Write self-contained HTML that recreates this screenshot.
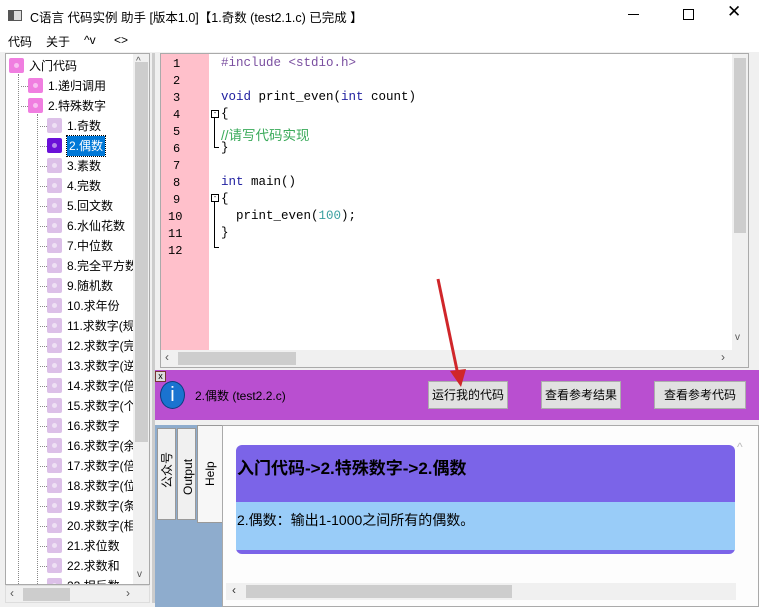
<!DOCTYPE html>
<html><head><meta charset="utf-8"><style>
*{margin:0;padding:0;box-sizing:border-box}
body{width:759px;height:607px;position:relative;overflow:hidden;background:#f0f0f0;font-family:"Liberation Sans","Microsoft YaHei","Noto Sans CJK SC",sans-serif;font-size:12px;color:#000}
.abs{position:absolute}
.title{left:0;top:0;width:759px;height:30px;background:#fff}
.menu{left:0;top:30px;width:759px;height:22px;background:#fff;font-size:12px}
.tree{left:5px;top:53px;width:145px;height:532px;background:#fff;border:1px solid #aaa;overflow:hidden}
.ti{position:absolute;height:20px;line-height:20px;font-size:12px;white-space:nowrap}
.ico{position:absolute;width:15px;height:15px;border-radius:2px}
.ico:after{content:"";position:absolute;left:5px;top:5px;width:5px;height:5px;border-radius:50%;background:rgba(255,255,255,.5)}
.code{font-family:"Liberation Mono",monospace;font-size:12.5px}
.btn{position:absolute;top:381px;height:28px;background:#e1e1e1;border:1px solid #adadad;text-align:center;line-height:26px;font-size:12px}
</style></head><body>
<div class="abs title">
 <div class="abs" style="left:8px;top:10px;width:14px;height:11px;border:1px solid #555;background:#ddd"><div style="width:5px;height:9px;background:#555"></div></div>
 <div class="abs" style="left:30px;top:7px;font-size:12.5px">C语言 代码实例 助手 [版本1.0]【1.奇数 (test2.1.c) 已完成 】</div>
 <div class="abs" style="left:628px;top:14px;width:11px;height:1px;background:#000"></div>
 <div class="abs" style="left:683px;top:9px;width:11px;height:11px;border:1px solid #000"></div>
 <div class="abs" style="left:727px;top:2px;font-size:17px">✕</div>
</div>
<div class="abs menu"><span class="abs" style="left:8px;top:3px">代码</span><span class="abs" style="left:46px;top:3px">关于</span><span class="abs" style="left:84px;top:3px">^v</span><span class="abs" style="left:114px;top:3px">&lt;&gt;</span></div>
<div class="abs tree">
<div class="abs" style="left:12px;top:20px;width:0;height:520px;border-left:1px dotted #888"></div>
<div class="abs" style="left:31px;top:60px;width:0;height:480px;border-left:1px dotted #888"></div>
<div id="t"></div>
<div class="abs" style="left:127px;top:0;width:17px;height:532px;background:#f0f0f0"></div>
<div class="abs" style="left:129px;top:8px;width:13px;height:380px;background:#cdcdcd"></div>
<div class="abs" style="left:130px;top:2px;font-size:10px;color:#555">^</div>
<div class="abs" style="left:131px;top:515px;font-size:10px;color:#555">v</div>
</div>
<div class="abs" style="left:5px;top:585px;width:145px;height:18px;background:#f0f0f0;border:1px solid #ddd"><div class="abs" style="left:17px;top:2px;width:47px;height:13px;background:#cdcdcd"></div><span class="abs" style="left:4px;top:0;color:#555">‹</span><span class="abs" style="left:120px;top:0;color:#555">›</span></div>
<div class="abs" style="left:152px;top:53px;width:3px;height:550px;background:#ccc"></div>
<!-- editor -->
<div class="abs" style="left:160px;top:53px;width:589px;height:315px;background:#fff;border:1px solid #aaa"></div>
<div class="abs" style="left:161px;top:54px;width:48px;height:296px;background:#ffc0cb"></div>
<div class="abs" style="left:209px;top:54px;width:523px;height:296px;background:#fff"></div>
<div class="abs" style="left:732px;top:54px;width:16px;height:296px;background:#f0f0f0"><div class="abs" style="left:2px;top:4px;width:12px;height:175px;background:#cdcdcd"></div><span class="abs" style="left:3px;top:278px;font-size:10px;color:#555">v</span></div>
<div class="abs" style="left:161px;top:350px;width:587px;height:17px;background:#f0f0f0"><div class="abs" style="left:17px;top:2px;width:118px;height:13px;background:#cdcdcd"></div><span class="abs" style="left:4px;top:0;color:#555">‹</span><span class="abs" style="left:560px;top:0;color:#555">›</span></div>
<div id="code"></div>
<div class="abs" style="left:211px;top:110px;width:8px;height:8px;border:1px solid #000;font-size:7px;line-height:5px;text-align:center">-</div>
<div class="abs" style="left:214px;top:118px;width:5px;height:30px;border-left:1px solid #000;border-bottom:1px solid #000"></div>
<div class="abs" style="left:211px;top:194px;width:8px;height:8px;border:1px solid #000;font-size:7px;line-height:5px;text-align:center">-</div>
<div class="abs" style="left:214px;top:202px;width:5px;height:46px;border-left:1px solid #000;border-bottom:1px solid #000"></div>
<!-- purple bar -->
<div class="abs" style="left:155px;top:370px;width:604px;height:50px;background:#b94fd0"></div>
<div class="abs" style="left:155px;top:371px;width:11px;height:11px;background:#ddd;border:1px solid #733;font-size:9px;line-height:8px;text-align:center">x</div>
<div class="abs" style="left:160px;top:381px;width:25px;height:28px;border-radius:50%;background:#1a73d0;border:1px solid #0b3d80;color:#fff;text-align:center;font-size:20px;line-height:26px">i</div>
<div class="abs" style="left:195px;top:387px;font-size:12px">2.偶数 (test2.2.c)</div>
<div class="btn" style="left:428px;width:80px">运行我的代码</div>
<div class="btn" style="left:541px;width:80px">查看参考结果</div>
<div class="btn" style="left:654px;width:92px">查看参考代码</div>
<svg class="abs" style="left:430px;top:275px" width="40" height="120"><line x1="8" y1="4" x2="28" y2="100" stroke="#d0262a" stroke-width="3"/><polygon points="20,96 36,94 31,112" fill="#d0262a"/></svg>
<!-- bottom -->
<div class="abs" style="left:155px;top:425px;width:604px;height:182px;background:#8eaccd"></div>
<div class="abs" style="left:222px;top:425px;width:537px;height:182px;background:#fdfdfd;border:1px solid #aaa"></div>
<div class="abs" style="left:157px;top:428px;width:19px;height:92px;background:#f0f0f0;border:1px solid #999"></div>
<div class="abs" style="left:177px;top:428px;width:19px;height:92px;background:#f0f0f0;border:1px solid #999"></div>
<div class="abs" style="left:197px;top:425px;width:25px;height:98px;background:#f7f7f7;border:1px solid #999;border-right:none"></div>
<div class="abs" style="left:158px;top:488px;transform:rotate(-90deg);transform-origin:0 0;font-size:12px;width:60px">公众号</div>
<div class="abs" style="left:181px;top:495px;transform:rotate(-90deg);transform-origin:0 0;font-size:12px">Output</div>
<div class="abs" style="left:203px;top:486px;transform:rotate(-90deg);transform-origin:0 0;font-size:12px">Help</div>
<div class="abs" style="left:236px;top:445px;width:499px;height:109px;background:#7b64e8;border-radius:6px"></div>
<div class="abs" style="left:236px;top:502px;width:499px;height:48px;background:#99ccf8"></div>
<div class="abs" style="left:237px;top:454px;font-size:17px;font-weight:bold">入门代码-&gt;2.特殊数字-&gt;2.偶数</div>
<div class="abs" style="left:237px;top:510px;font-size:14px">2.偶数：输出1-1000之间所有的偶数。</div>
<div class="abs" style="left:226px;top:583px;width:510px;height:17px;background:#f0f0f0"><div class="abs" style="left:20px;top:2px;width:266px;height:13px;background:#cdcdcd"></div><span class="abs" style="left:6px;top:0;color:#333">‹</span></div>
<div class="abs" style="left:737px;top:440px;font-size:12px;color:#bbb">^</div>
<script>
var items=[["入门代码",0,"#f07ee0"],["1.递归调用",1,"#f07ee0"],["2.特殊数字",1,"#f07ee0"],["1.奇数",2],["2.偶数",2,"#6a10d8",1],["3.素数",2],["4.完数",2],["5.回文数",2],["6.水仙花数",2],["7.中位数",2],["8.完全平方数",2],["9.随机数",2],["10.求年份",2],["11.求数字(规",2],["12.求数字(完",2],["13.求数字(逆",2],["14.求数字(倍",2],["15.求数字(个",2],["16.求数字",2],["16.求数字(余",2],["17.求数字(倍",2],["18.求数字(位",2],["19.求数字(条",2],["20.求数字(相",2],["21.求位数",2],["22.求数和",2],["23.相反数",2]];
var h="";items.forEach(function(it,i){var y=2+i*20,x=3+it[1]*19;var c=it[2]||"#dcc0e8";
if(it[1]>0)h+='<div class="abs" style="left:'+(x-7)+'px;top:'+(y+10)+'px;width:7px;border-top:1px dotted #888"></div>';
h+='<div class="ico" style="left:'+x+'px;top:'+(y+2)+'px;background:'+c+'"></div>';
h+='<div class="ti" style="left:'+(x+20)+'px;top:'+y+'px;'+(it[3]?'background:#0078d7;color:#fff;padding:0 2px;outline:1px dotted #000':'')+'">'+it[0]+'</div>';});
document.getElementById("t").innerHTML=h;
var code=['<span style="color:#7a4fa0">#include &lt;stdio.h&gt;</span>','','<span style="color:#2020a0">void</span> print_even(<span style="color:#2020a0">int</span> count)','{','<span style="color:#3aaa5a;font-family:Liberation Sans,Noto Sans CJK SC,sans-serif;font-size:13.5px">//请写代码实现</span>','}','','<span style="color:#2020a0">int</span> main()','{','  print_even(<span style="color:#3aa0a0">100</span>);','}',''];
var s="";code.forEach(function(c,i){var y=56+i*17;s+='<div class="abs code" style="left:'+(i<9?173:168)+'px;top:'+(y+1)+'px;font-size:12px">'+(i+1)+'</div>';
s+='<div class="abs code" style="left:221px;top:'+y+'px;white-space:pre">'+c+'</div>';});
document.getElementById("code").innerHTML=s;
</script>
</body></html>
